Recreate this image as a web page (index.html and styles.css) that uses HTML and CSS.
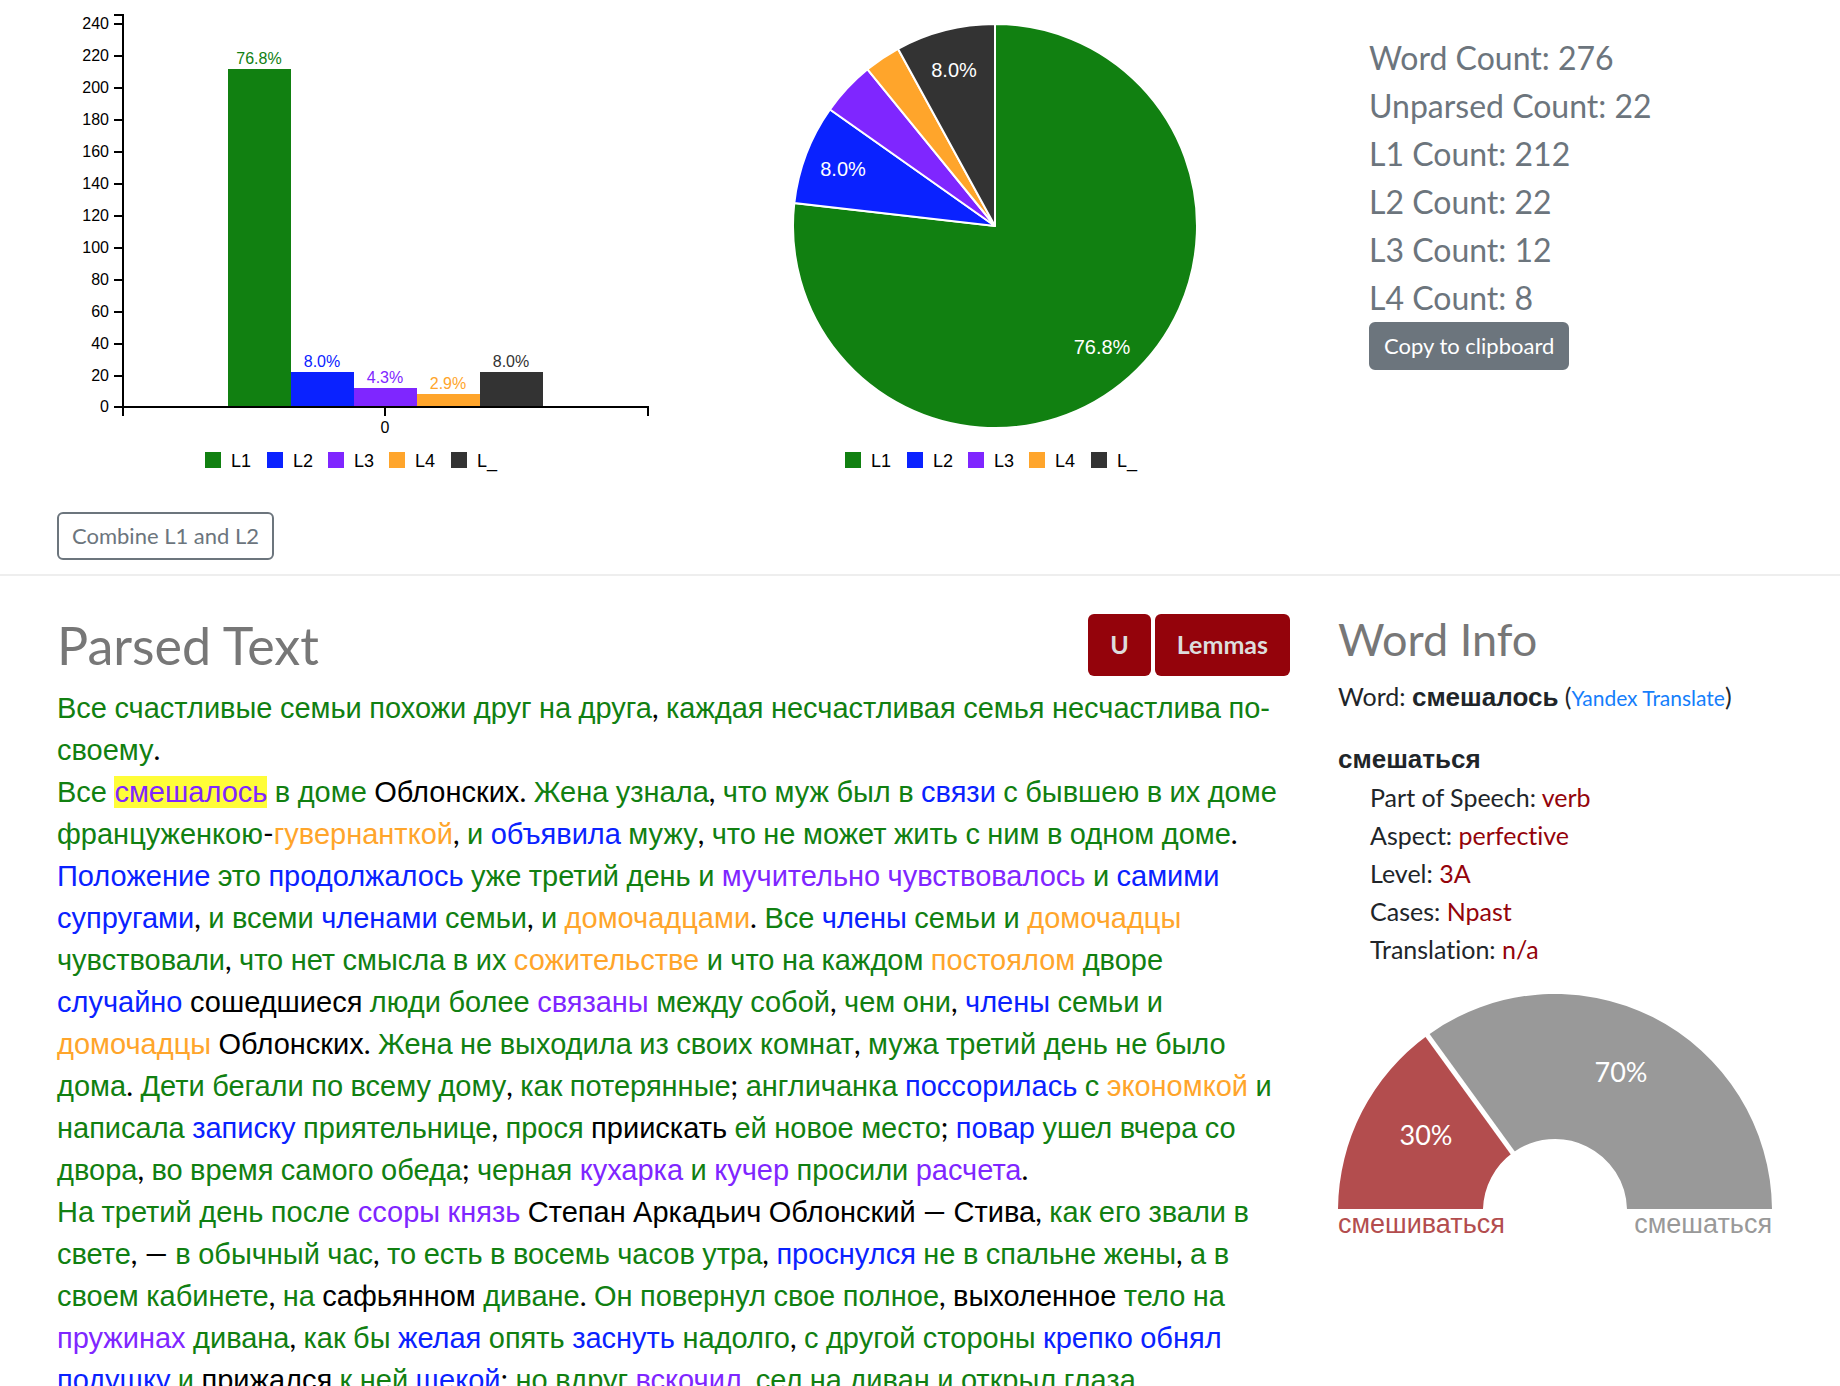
FILE: index.html
```html
<!DOCTYPE html>
<html lang="en">
<head>
<meta charset="utf-8">
<title>Parsed Text</title>
<link rel="stylesheet" href="styles.css">
</head>
<body>
<section class="summary">
  <div class="charts">
    <svg class="chart" viewBox="0 0 640 480" role="img" aria-label="Words per level">
      <g class="bars">
        <rect class="l1" x="196" y="69" width="63" height="338"/>
        <rect class="l2" x="259" y="372" width="63" height="35"/>
        <rect class="l3" x="322" y="388" width="63" height="19"/>
        <rect class="l4" x="385" y="394" width="63" height="13"/>
        <rect class="lx" x="448" y="372" width="63" height="35"/>
      </g>
      <path class="axis" d="M82 15H91V407H82M82 24H91M82 56H91M82 88H91M82 120H91M82 152H91M82 184H91M82 216H91M82 248H91M82 280H91M82 312H91M82 344H91M82 376H91"/>
      <path class="axis" d="M91 416V407H616V416M353 407V416"/>
      <g class="ticks">
        <text x="77" y="29">240</text>
        <text x="77" y="61">220</text>
        <text x="77" y="93">200</text>
        <text x="77" y="125">180</text>
        <text x="77" y="157">160</text>
        <text x="77" y="189">140</text>
        <text x="77" y="221">120</text>
        <text x="77" y="253">100</text>
        <text x="77" y="285">80</text>
        <text x="77" y="317">60</text>
        <text x="77" y="349">40</text>
        <text x="77" y="381">20</text>
        <text x="77" y="412">0</text>
      </g>
      <g class="bar-labels">
        <text class="axis-label" x="353" y="433">0</text>
        <text class="l1" x="227" y="64">76.8%</text>
        <text class="l2" x="290" y="367">8.0%</text>
        <text class="l3" x="353" y="383">4.3%</text>
        <text class="l4" x="416" y="389">2.9%</text>
        <text class="lx" x="479" y="367">8.0%</text>
      </g>
      <g class="legend">
        <rect class="l1" x="173" y="452" width="16" height="16"/><text x="199" y="467">L1</text>
        <rect class="l2" x="235" y="452" width="16" height="16"/><text x="261" y="467">L2</text>
        <rect class="l3" x="296" y="452" width="16" height="16"/><text x="322" y="467">L3</text>
        <rect class="l4" x="357" y="452" width="16" height="16"/><text x="383" y="467">L4</text>
        <rect class="lx" x="419" y="452" width="16" height="16"/><text x="445" y="467">L_</text>
      </g>
    </svg>
    <svg class="chart" viewBox="0 0 640 480" role="img" aria-label="Share of each level">
      <g class="slices">
        <path class="l1" d="M323 226V24A202 202 0 1 1 122.300 203.100Z"/>
        <path class="l2" d="M323 226L122.300 203.100A202 202 0 0 1 158 109.500Z"/>
        <path class="l3" d="M323 226L158 109.500A202 202 0 0 1 195.500 69.300Z"/>
        <path class="l4" d="M323 226L195.500 69.300A202 202 0 0 1 226 48.800Z"/>
        <path class="lx" d="M323 226L226 48.800A202 202 0 0 1 323 24Z"/>
      </g>
      <g class="slice-labels">
        <text x="430" y="354">76.8%</text>
        <text x="171" y="176">8.0%</text>
        <text x="282" y="77">8.0%</text>
      </g>
      <g class="legend">
        <rect class="l1" x="173" y="452" width="16" height="16"/><text x="199" y="467">L1</text>
        <rect class="l2" x="235" y="452" width="16" height="16"/><text x="261" y="467">L2</text>
        <rect class="l3" x="296" y="452" width="16" height="16"/><text x="322" y="467">L3</text>
        <rect class="l4" x="357" y="452" width="16" height="16"/><text x="383" y="467">L4</text>
        <rect class="lx" x="419" y="452" width="16" height="16"/><text x="445" y="467">L_</text>
      </g>
    </svg>
    <div class="stats">
      <ul class="counts">
        <li>Word Count: 276</li>
        <li>Unparsed Count: 22</li>
        <li>L1 Count: 212</li>
        <li>L2 Count: 22</li>
        <li>L3 Count: 12</li>
        <li>L4 Count: 8</li>
      </ul>
      <button class="btn btn-solid" type="button">Copy to clipboard</button>
    </div>
  </div>
  <button class="btn btn-outline" type="button">Combine L1 and L2</button>
</section>
<hr class="rule">
<main class="content">
  <section class="parsed">
    <header class="parsed-head">
      <h1 class="title">Parsed Text</h1>
      <div class="toggles">
        <button class="toggle" type="button">U</button>
        <button class="toggle" type="button">Lemmas</button>
      </div>
    </header>
    <div class="text" lang="ru">
      <p><span class="l1">Все</span> <span class="l1">счастливые</span> <span class="l1">семьи</span> <span class="l1">похожи</span> <span class="l1">друг</span> <span class="l1">на</span> <span class="l1">друга</span>, <span class="l1">каждая</span> <span class="l1">несчастливая</span> <span class="l1">семья</span> <span class="l1">несчастлива</span> <span class="l1">по-своему</span>.</p>
      <p><span class="l1">Все</span> <span class="l3 picked">смешалось</span> <span class="l1">в</span> <span class="l1">доме</span> <span class="w">Облонских</span>. <span class="l1">Жена</span> <span class="l1">узнала</span>, <span class="l1">что</span> <span class="l1">муж</span> <span class="l1">был</span> <span class="l1">в</span> <span class="l2">связи</span> <span class="l1">с</span> <span class="l1">бывшею</span> <span class="l1">в</span> <span class="l1">их</span> <span class="l1">доме</span> <span class="l1">француженкою</span>-<span class="l4">гувернанткой</span>, <span class="l1">и</span> <span class="l2">объявила</span> <span class="l1">мужу</span>, <span class="l1">что</span> <span class="l1">не</span> <span class="l1">может</span> <span class="l1">жить</span> <span class="l1">с</span> <span class="l1">ним</span> <span class="l1">в</span> <span class="l1">одном</span> <span class="l1">доме</span>. <span class="l2">Положение</span> <span class="l1">это</span> <span class="l2">продолжалось</span> <span class="l1">уже</span> <span class="l1">третий</span> <span class="l1">день</span> <span class="l1">и</span> <span class="l3">мучительно</span> <span class="l3">чувствовалось</span> <span class="l1">и</span> <span class="l2">самими</span> <span class="l2">супругами</span>, <span class="l1">и</span> <span class="l1">всеми</span> <span class="l2">членами</span> <span class="l1">семьи</span>, <span class="l1">и</span> <span class="l4">домочадцами</span>. <span class="l1">Все</span> <span class="l2">члены</span> <span class="l1">семьи</span> <span class="l1">и</span> <span class="l4">домочадцы</span> <span class="l1">чувствовали</span>, <span class="l1">что</span> <span class="l1">нет</span> <span class="l1">смысла</span> <span class="l1">в</span> <span class="l1">их</span> <span class="l4">сожительстве</span> <span class="l1">и</span> <span class="l1">что</span> <span class="l1">на</span> <span class="l1">каждом</span> <span class="l4">постоялом</span> <span class="l1">дворе</span> <span class="l2">случайно</span> <span class="w">сошедшиеся</span> <span class="l1">люди</span> <span class="l1">более</span> <span class="l3">связаны</span> <span class="l1">между</span> <span class="l1">собой</span>, <span class="l1">чем</span> <span class="l1">они</span>, <span class="l2">члены</span> <span class="l1">семьи</span> <span class="l1">и</span> <span class="l4">домочадцы</span> <span class="w">Облонских</span>. <span class="l1">Жена</span> <span class="l1">не</span> <span class="l1">выходила</span> <span class="l1">из</span> <span class="l1">своих</span> <span class="l1">комнат</span>, <span class="l1">мужа</span> <span class="l1">третий</span> <span class="l1">день</span> <span class="l1">не</span> <span class="l1">было</span> <span class="l1">дома</span>. <span class="l1">Дети</span> <span class="l1">бегали</span> <span class="l1">по</span> <span class="l1">всему</span> <span class="l1">дому</span>, <span class="l1">как</span> <span class="l1">потерянные</span>; <span class="l1">англичанка</span> <span class="l2">поссорилась</span> <span class="l1">с</span> <span class="l4">экономкой</span> <span class="l1">и</span> <span class="l1">написала</span> <span class="l2">записку</span> <span class="l1">приятельнице</span>, <span class="l1">прося</span> <span class="w">приискать</span> <span class="l1">ей</span> <span class="l1">новое</span> <span class="l1">место</span>; <span class="l2">повар</span> <span class="l1">ушел</span> <span class="l1">вчера</span> <span class="l1">со</span> <span class="l1">двора</span>, <span class="l1">во</span> <span class="l1">время</span> <span class="l1">самого</span> <span class="l1">обеда</span>; <span class="l1">черная</span> <span class="l3">кухарка</span> <span class="l1">и</span> <span class="l3">кучер</span> <span class="l1">просили</span> <span class="l3">расчета</span>.</p>
      <p><span class="l1">На</span> <span class="l1">третий</span> <span class="l1">день</span> <span class="l1">после</span> <span class="l3">ссоры</span> <span class="l3">князь</span> <span class="w">Степан</span> <span class="w">Аркадьич</span> <span class="w">Облонский</span> — <span class="w">Стива</span>, <span class="l1">как</span> <span class="l1">его</span> <span class="l1">звали</span> <span class="l1">в</span> <span class="l1">свете</span>, — <span class="l1">в</span> <span class="l1">обычный</span> <span class="l1">час</span>, <span class="l1">то</span> <span class="l1">есть</span> <span class="l1">в</span> <span class="l1">восемь</span> <span class="l1">часов</span> <span class="l1">утра</span>, <span class="l2">проснулся</span> <span class="l1">не</span> <span class="l1">в</span> <span class="l1">спальне</span> <span class="l1">жены</span>, <span class="l1">а</span> <span class="l1">в</span> <span class="l1">своем</span> <span class="l1">кабинете</span>, <span class="l1">на</span> <span class="w">сафьянном</span> <span class="l1">диване</span>. <span class="l1">Он</span> <span class="l1">повернул</span> <span class="l1">свое</span> <span class="l1">полное</span>, <span class="w">выхоленное</span> <span class="l1">тело</span> <span class="l1">на</span> <span class="l3">пружинах</span> <span class="l1">дивана</span>, <span class="l1">как</span> <span class="l1">бы</span> <span class="l2">желая</span> <span class="l1">опять</span> <span class="l2">заснуть</span> <span class="l1">надолго</span>, <span class="l1">с</span> <span class="l1">другой</span> <span class="l1">стороны</span> <span class="l2">крепко</span> <span class="l2">обнял</span> <span class="l2">подушку</span> <span class="l1">и</span> <span class="w">прижался</span> <span class="l1">к</span> <span class="l1">ней</span> <span class="l2">щекой</span>; <span class="l1">но</span> <span class="l1">вдруг</span> <span class="l3">вскочил</span>, <span class="l1">сел</span> <span class="l1">на</span> <span class="l1">диван</span> <span class="l1">и</span> <span class="l1">открыл</span> <span class="l1">глаза</span>.</p>
    </div>
  </section>
  <aside class="info">
    <h2 class="subtitle">Word Info</h2>
    <p class="word">Word: <b lang="ru">смешалось</b> (<a class="link" href="#translate">Yandex Translate</a>)</p>
    <h3 class="lemma" lang="ru">смешаться</h3>
    <ul class="details">
      <li>Part of Speech: <span class="value">verb</span></li>
      <li>Aspect: <span class="value">perfective</span></li>
      <li>Level: <span class="value">3A</span></li>
      <li>Cases: <span class="value">Npast</span></li>
      <li>Translation: <span class="value">n/a</span></li>
    </ul>
    <svg class="gauge" viewBox="0 0 434 250" role="img" aria-label="Aspect pair frequency">
      <path class="imperfective" d="M0 215A217 217 0 0 1 89.400 41.400L174.700 158.800A72 72 0 0 0 145 215Z"/>
      <path class="perfective" d="M89.400 41.400A217 217 0 0 1 434 215H289A72 72 0 0 0 174.700 158.800Z"/>
      <path class="split" d="M87 38L177 162"/>
      <text class="share" x="88" y="151">30%</text>
      <text class="share" x="283" y="88">70%</text>
      <text class="imperfective" x="0" y="239">смешиваться</text>
      <text class="perfective end" x="434" y="239">смешаться</text>
    </svg>
  </aside>
</main>
</body>
</html>
```
FILE: styles.css
```css
* {
  box-sizing: border-box;
}

body {
  margin: 0;
  background: #fff;
  color: #212529;
  font-family: Lato, "Liberation Sans", sans-serif;
  font-size: 25px;
  font-variant-ligatures: none;
  line-height: 38px;
}

h1,
h2,
h3,
p,
ul {
  margin: 0;
  padding: 0;
  font-weight: 400;
}

ul {
  list-style: none;
}

button {
  font-family: inherit;
  cursor: pointer;
}

.l1 { color: #118011; fill: #118011; }
.l2 { color: #0a22ff; fill: #0a22ff; }
.l3 { color: #7f26ff; fill: #7f26ff; }
.l4 { color: #ffa52b; fill: #ffa52b; }
.lx { color: #333; fill: #333; }

/* Charts and counts */

.summary {
  padding: 0 32px 14px;
}

.charts {
  display: grid;
  grid-template-columns: 640fr 640fr 496fr;
}

.chart {
  display: block;
  width: 100%;
  height: auto;
  font-family: "Liberation Sans", sans-serif;
}

.axis {
  fill: none;
  stroke: #000;
  stroke-width: 2;
}

.ticks {
  font-size: 16px;
  text-anchor: end;
}

.bar-labels {
  font-size: 16px;
  text-anchor: middle;
}

.legend {
  font-size: 18px;
}

.slices {
  stroke: #fff;
  stroke-width: 2;
}

.slice-labels {
  fill: #fff;
  font-size: 20px;
  text-anchor: middle;
}

.stats {
  padding: 34px 0 0 57px;
}

.counts {
  color: #6c757d;
  font-size: 32px;
  line-height: 48px;
}

.btn {
  display: block;
  height: 48px;
  padding: 0 13px 2px;
  border: 2px solid #6c757d;
  border-radius: 6px;
  font-size: 22px;
}

.btn-solid {
  background: #6c757d;
  color: #fff;
}

.btn-outline {
  margin: 32px 0 0 25px;
  background: #fff;
  color: #6c757d;
}

.rule {
  height: 2px;
  margin: 0;
  border: 0;
  background: #eee;
}

/* Parsed text and word details */

.content {
  display: grid;
  grid-template-columns: 1233fr 434fr;
  gap: 48px;
  padding: 38px 68px 0 57px;
}

.parsed-head {
  display: flex;
  align-items: center;
  justify-content: space-between;
  margin-bottom: 10px;
}

.title {
  color: #777;
  font-size: 52px;
  line-height: 62px;
}

.toggles {
  display: flex;
  gap: 4px;
}

.toggle {
  height: 62px;
  padding: 0 22px 2px;
  border: 0;
  border-radius: 6px;
  background: #94030b;
  color: #ddd;
  font-size: 25px;
  font-weight: 700;
}

.text {
  color: #000;
  font-size: 29px;
  line-height: 42px;
}

.text span,
b,
.lemma {
  font-family: "Liberation Sans", sans-serif;
}

.text span,
b {
  line-height: 28px;
}

.picked {
  background: #fffd38;
}

.subtitle {
  color: #777;
  font-size: 45px;
  line-height: 50px;
}

.word {
  margin-top: 13px;
}

b,
.lemma {
  font-size: 26px;
  font-weight: 700;
}

.link {
  color: #157efb;
  font-size: 21px;
  line-height: 28px;
  text-decoration: none;
}

.lemma {
  margin-top: 26px;
  line-height: 37px;
}

.details {
  padding-left: 32px;
}

.value {
  color: #94030b;
}

.gauge {
  display: block;
  width: 100%;
  height: auto;
  margin-top: 26px;
  font-family: "Liberation Sans", sans-serif;
  font-size: 27px;
}

.imperfective {
  fill: #b34d4e;
}

.perfective {
  fill: #999;
}

.split {
  stroke: #fff;
  stroke-width: 5;
}

.share {
  fill: #fff;
  font-family: Lato, sans-serif;
  text-anchor: middle;
}

.end {
  text-anchor: end;
}
```
